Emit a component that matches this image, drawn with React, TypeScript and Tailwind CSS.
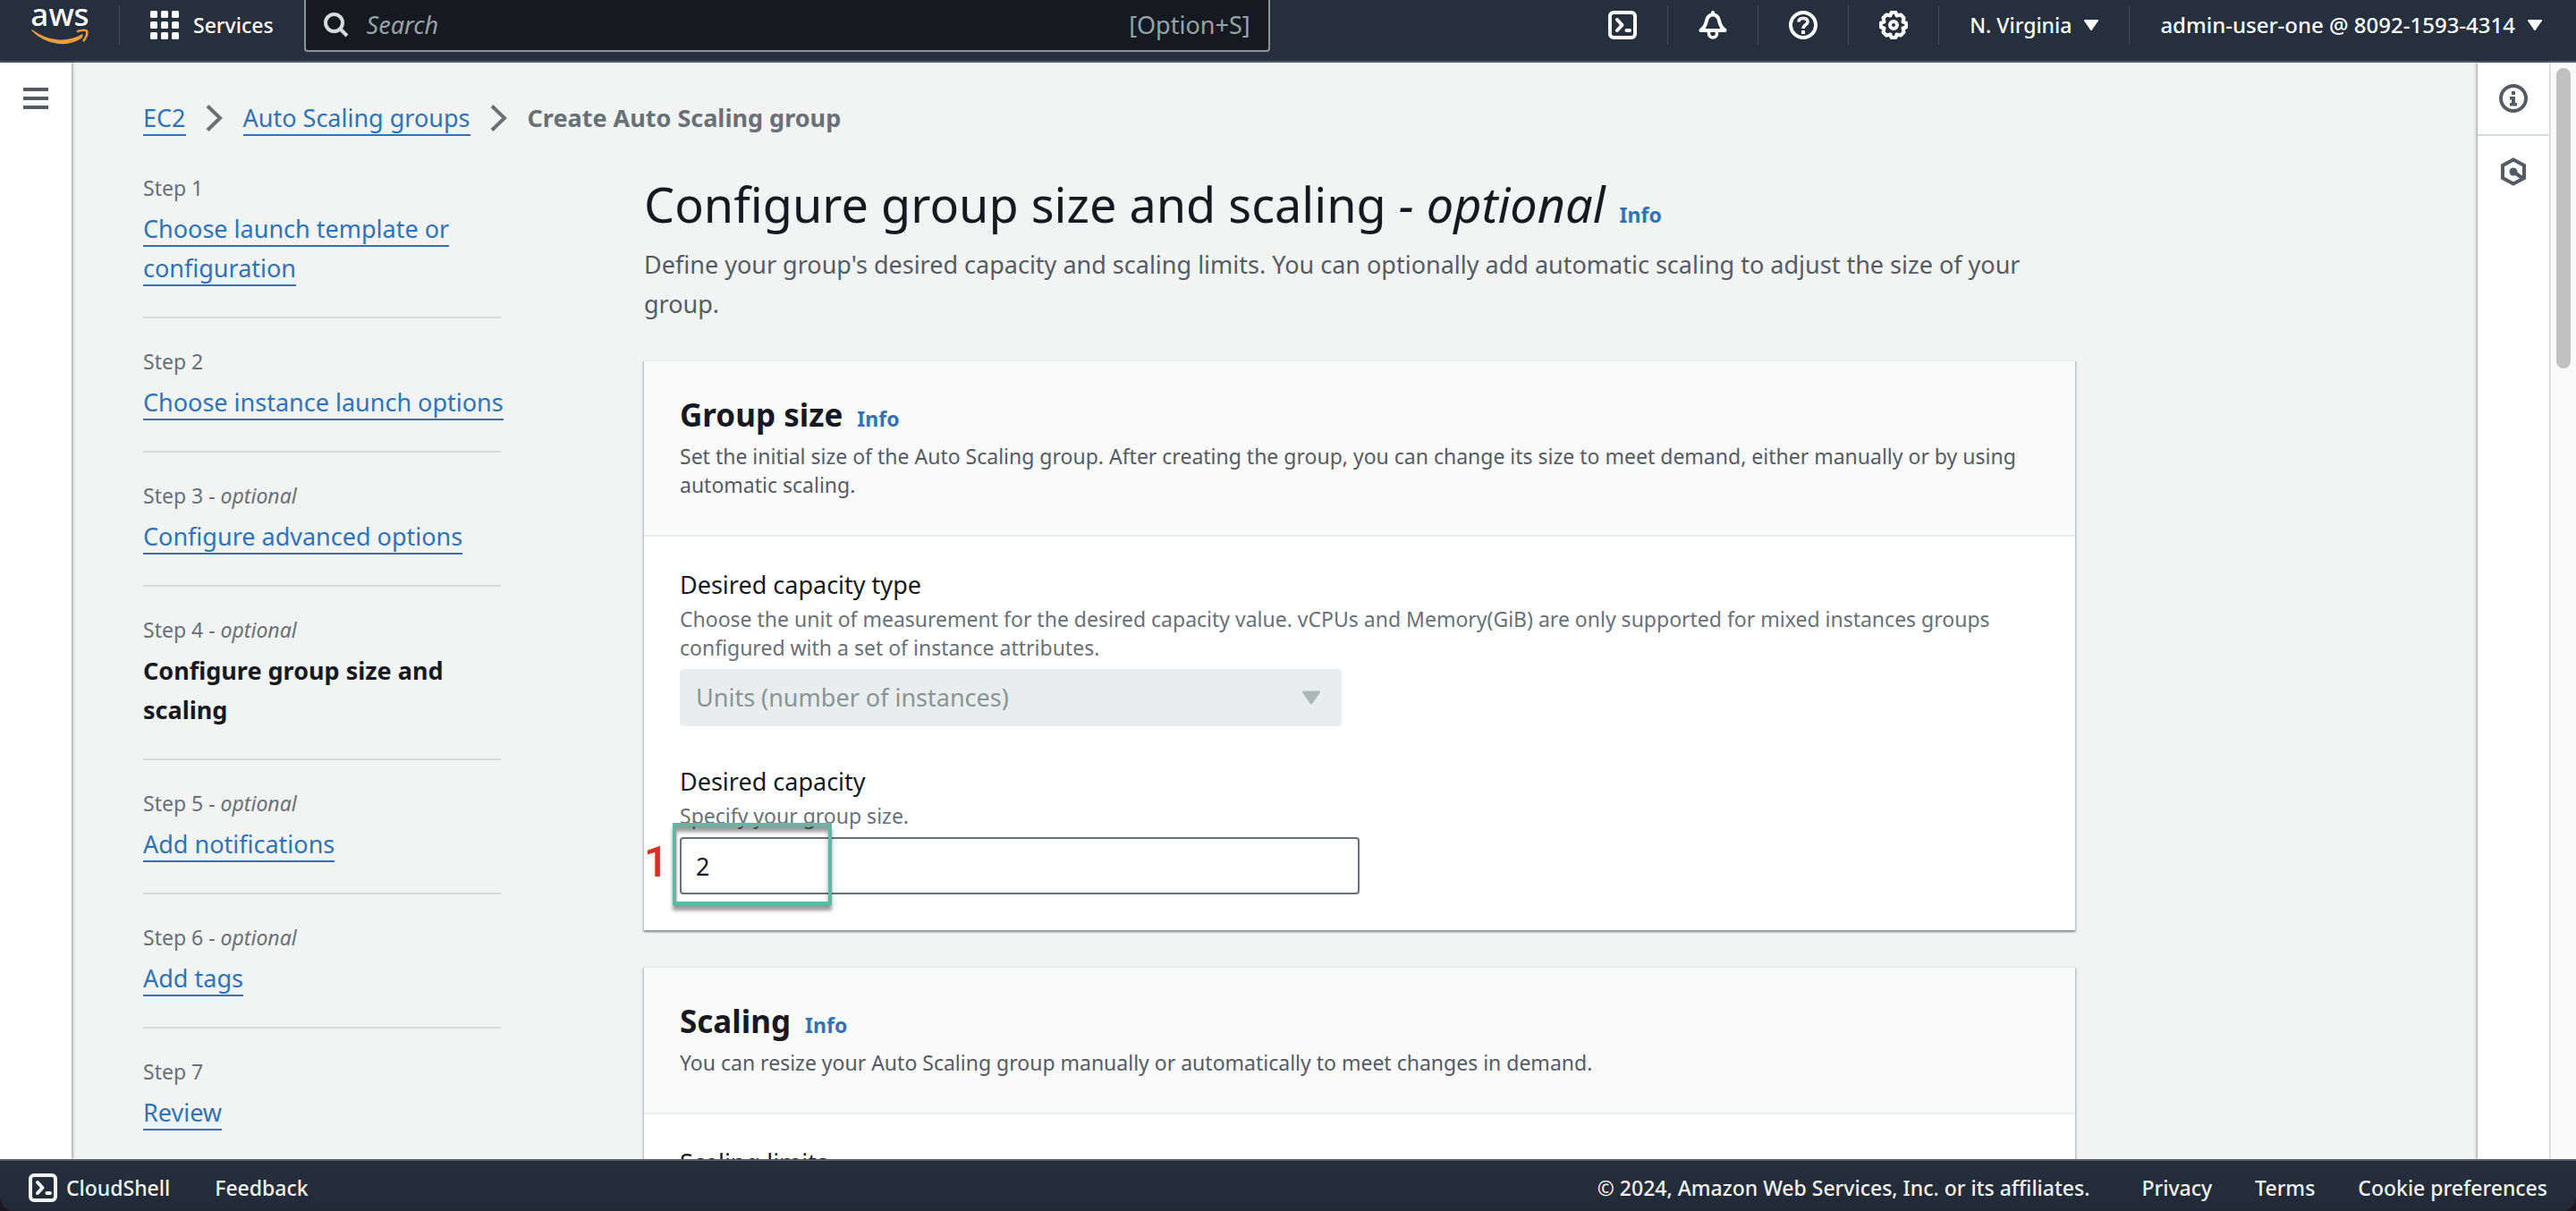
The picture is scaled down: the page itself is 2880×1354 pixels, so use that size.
import React from "react";

type Step = { n: number; optional?: boolean; title: string; current?: boolean };

const steps: Step[] = [
  { n: 1, title: "Choose launch template or configuration" },
  { n: 2, title: "Choose instance launch options" },
  { n: 3, optional: true, title: "Configure advanced options" },
  { n: 4, optional: true, title: "Configure group size and scaling", current: true },
  { n: 5, optional: true, title: "Add notifications" },
  { n: 6, optional: true, title: "Add tags" },
  { n: 7, title: "Review" },
];

function CloudShellIcon() {
  return (
    <svg viewBox="0 0 32 32" className="size-8" fill="none" stroke="currentColor" strokeWidth="4" aria-hidden="true">
      <rect x="2" y="2" width="28" height="28" rx="4" />
      <path d="M10 10L15.500 16L10 22" strokeLinecap="round" strokeLinejoin="round" />
      <path d="M20.500 22H24" strokeLinecap="round" />
    </svg>
  );
}

function BellIcon() {
  return (
    <svg viewBox="0 0 32 32" className="size-8" fill="none" stroke="currentColor" strokeWidth="4" strokeLinejoin="round" aria-hidden="true">
      <path d="M16 2V4" strokeLinecap="round" />
      <path d="M2.500 22H29.500C26 19.500 24 16 23 11C22 7 19.500 4.500 16 4.500S10 7 9 11C8 16 6 19.500 2.500 22Z" />
      <path d="M11.500 23V25.500C11.500 28 13.500 30 16 30S20.500 28 20.500 25.500V23" strokeWidth="3.500" />
    </svg>
  );
}

function HelpIcon() {
  return (
    <svg viewBox="0 0 32 32" className="size-8" fill="none" stroke="currentColor" strokeWidth="4" aria-hidden="true">
      <circle cx="16" cy="16" r="14" />
      <path d="M11 12.500C11 10 13 8.500 16 8.500S21 10 21 12.500C21 16 16 15.500 16 20" strokeWidth="3.500" />
      <rect x="14" y="22" width="4" height="4" fill="currentColor" stroke="none" />
    </svg>
  );
}

function GearIcon() {
  return (
    <svg viewBox="0 0 32 32" className="size-8" fill="none" stroke="currentColor" strokeWidth="4" strokeLinejoin="round" aria-hidden="true">
      <path d="M13.500 2H18.500L19.500 5.500L24 4.500L27.500 8L26.500 12.500L30 13.500V18.500L26.500 19.500L27.500 24L24 27.500L19.500 26.500L18.500 30H13.500L12.500 26.500L8 27.500L4.500 24L5.500 19.500L2 18.500V13.500L5.500 12.500L4.500 8L8 4.500L12.500 5.500Z" />
      <circle cx="16" cy="16" r="4" />
    </svg>
  );
}

function Caret({ className }: { className: string }) {
  return (
    <svg viewBox="0 0 16 12" className={className} fill="currentColor" stroke="currentColor" strokeWidth="2" strokeLinejoin="round" aria-hidden="true">
      <path d="M1 1H15L8 11Z" />
    </svg>
  );
}

function Chevron() {
  return (
    <svg viewBox="0 0 20 30" className="h-[30px] w-5 text-[#687078]" fill="none" stroke="currentColor" strokeWidth="4" aria-hidden="true">
      <path d="M2 1.500L16 15L2 28.500" />
    </svg>
  );
}

function InfoLink() {
  return (
    <a href="#info" className="text-[23px] font-bold text-[#2e73b8]">
      Info
    </a>
  );
}

function Divider() {
  return <span className="h-11 w-px bg-[#414a58]" />;
}

function Header() {
  return (
    <header className="flex h-[70px] shrink-0 items-start border-b-2 border-[#545b64] bg-[#262f3e] text-[23px] font-medium text-white">
      <div className="flex h-14 flex-1 items-center">
        <a href="#home" aria-label="aws" className="ml-[35px]">
          <svg viewBox="0 0 64 44" className="h-11 w-16" aria-hidden="true">
            <text x="32" y="23" textAnchor="middle" fontSize="35" fontFamily="Noto Sans" fontWeight="500" fill="#fff">
              aws
            </text>
            <path d="M1 28C20 42 42 42 57 33L56 36C42 46 18 45 1 28Z" fill="#ef9d3c" stroke="#ef9d3c" strokeWidth="1.500" strokeLinejoin="round" />
            <path d="M51 29.500C55 27.500 60 27.500 62 28.500C63 32 61 37 58 40" fill="none" stroke="#ef9d3c" strokeWidth="2.500" />
          </svg>
        </a>
        <span className="mx-[34px]">
          <span className="block h-11 w-px bg-[#414a58]" />
        </span>
        <button className="flex items-center gap-4">
          <svg viewBox="0 0 32 32" className="size-8" fill="currentColor" aria-hidden="true">
            {[0, 12, 24].map((y) => [0, 12, 24].map((x) => <rect key={`${x}-${y}`} x={x} y={y} width="8" height="8" rx="1.500" />))}
          </svg>
          Services
        </button>
        <div className="ml-[34px] flex h-[60px] w-[1080px] items-center rounded-b-[4px] border-2 border-t-0 border-[#879596] bg-[#16191f] px-5 pt-0.5 text-[#95a5a6]">
          <svg viewBox="0 0 28 28" className="size-7 text-[#d5dbdb]" fill="none" stroke="currentColor" strokeWidth="4" aria-hidden="true">
            <circle cx="11.500" cy="11.500" r="9.500" />
            <path d="M18 18L26 26" />
          </svg>
          <input aria-label="Search" placeholder="Search" className="ml-5 min-w-0 flex-1 bg-transparent text-[27px] font-normal italic outline-none placeholder:text-[#95a5a6]" />
          <span className="text-[27px] font-normal">[Option+S]</span>
        </div>
      </div>
      <div className="flex h-14 items-center gap-[34px] pr-[38px]">
        <button aria-label="CloudShell"><CloudShellIcon /></button>
        <Divider />
        <button aria-label="Notifications"><BellIcon /></button>
        <Divider />
        <button aria-label="Support"><HelpIcon /></button>
        <Divider />
        <button aria-label="Settings"><GearIcon /></button>
        <Divider />
        <button className="flex items-center gap-3.5">
          N. Virginia <Caret className="h-3 w-4" />
        </button>
        <Divider />
        <button className="flex items-center gap-3.5 text-[24px]">
          admin-user-one @ 8092-1593-4314 <Caret className="h-3 w-4" />
        </button>
      </div>
    </header>
  );
}

function StepNav() {
  return (
    <ol className="w-[400px] shrink-0">
      {steps.map((s) => (
        <li key={s.n} className="mb-7 border-b-2 border-[#d5dbdb] pb-8 last:border-0">
          <div className="text-[23px] leading-10 text-[#687078]">
            Step {s.n}
            {s.optional && (
              <>
                {" "}- <i>optional</i>
              </>
            )}
          </div>
          <div className="mt-1 -mr-4 text-[27px] leading-[44px]">
            {s.current ? (
              <b className="text-[#16191f]">{s.title}</b>
            ) : (
              <a href={`#step-${s.n}`} className="border-b-2 border-[#2e73b8] text-[#2e73b8]">
                {s.title}
              </a>
            )}
          </div>
        </li>
      ))}
    </ol>
  );
}

function Card({ title, desc, children }: { title: string; desc: string; children: React.ReactNode }) {
  return (
    <section className="border-t-2 border-[#eaeded] bg-white shadow-[0_2px_2px_0_#879596,2px_2px_2px_0_#d5dbdb,-2px_2px_2px_0_#d5dbdb]">
      <div className="border-b-2 border-[#eaeded] bg-[#fafafa] px-10 pt-9 pb-10">
        <h2 className="flex items-baseline gap-4 text-[35px] leading-[48px] font-bold text-[#16191f]">
          {title} <InfoLink />
        </h2>
        <p className="mt-0.5 text-[23px] leading-8 text-[#545b64]">{desc}</p>
      </div>
      <div className="px-10 pt-8 pb-10">{children}</div>
    </section>
  );
}

function Main() {
  return (
    <main className="w-[1600px] pt-1.5">
      <h1 className="flex items-baseline gap-4 text-[54px] leading-[64px] text-[#16191f]">
        <span>
          Configure group size and scaling <i>- optional</i>
        </span>
        <InfoLink />
      </h1>
      <p className="mt-0.5 text-[27px] leading-[44px] text-[#545b64]">
        Define your group's desired capacity and scaling limits. You can optionally add automatic scaling to adjust the size of your group.
      </p>
      <div className="mt-10 flex flex-col gap-10">
        <Card
          title="Group size"
          desc="Set the initial size of the Auto Scaling group. After creating the group, you can change its size to meet demand, either manually or by using automatic scaling."
        >
          <label htmlFor="type" className="block text-[27px] leading-[44px] text-[#16191f]">
            Desired capacity type
          </label>
          <p className="text-[23px] leading-8 text-[#687078]">
            Choose the unit of measurement for the desired capacity value. vCPUs and Memory(GiB) are only supported for mixed instances groups configured with a set of instance attributes.
          </p>
          <div className="relative mt-2 w-[740px]">
            <select id="type" disabled className="h-16 w-full appearance-none rounded-[4px] bg-[#eaeded] px-[18px] text-[27px] text-[#879596] opacity-100">
              <option>Units (number of instances)</option>
            </select>
            <Caret className="absolute top-6 right-6 h-4 w-5 text-[#aab7b8]" />
          </div>
          <label htmlFor="capacity" className="mt-10 block text-[27px] leading-[44px] text-[#16191f]">
            Desired capacity
          </label>
          <p className="text-[23px] leading-8 text-[#687078]">Specify your group size.</p>
          <div className="relative mt-2 w-[760px]">
            <input id="capacity" defaultValue="2" className="block h-16 w-full rounded-[4px] border-2 border-[#687078] bg-white px-4 text-[27px] text-[#16191f]" />
            <span className="absolute -top-4 -left-2 h-[92px] w-[178px] border-4 border-[#5bb9a6] shadow-[0_6px_4px_0_#00000066,inset_0_6px_4px_0_#00000066]" />
            <span className="absolute top-0 -left-10 font-['Roboto',sans-serif] text-[48px] leading-[56px] font-medium text-[#d93025]">1</span>
          </div>
        </Card>
        <Card title="Scaling" desc="You can resize your Auto Scaling group manually or automatically to meet changes in demand.">
          <h3 className="text-[27px] leading-[44px] text-[#16191f]">Scaling limits</h3>
        </Card>
      </div>
    </main>
  );
}

export default function App() {
  return (
    <div className="flex h-screen flex-col overflow-hidden bg-[#1a1720] font-['Noto_Sans',sans-serif]">
      <Header />
      <div className="flex min-h-0 flex-1 bg-[#f2f4f3]">
        <aside className="z-10 w-20 shrink-0 bg-white pt-7 text-center shadow-[1px_0_3px_#00000066]">
          <button aria-label="Open navigation">
            <svg viewBox="0 0 28 24" className="h-6 w-7" fill="#545b64" aria-hidden="true">
              <rect width="28" height="4" />
              <rect y="10" width="28" height="4" />
              <rect y="20" width="28" height="4" />
            </svg>
          </button>
        </aside>
        <div className="min-w-0 flex-1 overflow-hidden px-20 pt-10">
          <nav aria-label="Breadcrumb" className="flex items-center gap-[22px] text-[27px] leading-[44px] text-[#2e73b8]">
            <span><a href="#ec2" className="border-b-2 border-[#2e73b8]">EC2</a></span>
            <Chevron />
            <span><a href="#asg" className="border-b-2 border-[#2e73b8]">Auto Scaling groups</a></span>
            <Chevron />
            <b className="text-[#687078]">Create Auto Scaling group</b>
          </nav>
          <div className="mt-9 flex gap-40">
            <StepNav />
            <Main />
          </div>
        </div>
        <aside className="z-10 w-20 shrink-0 bg-white text-[#545b64] shadow-[-1px_0_3px_#00000066]">
          <button aria-label="Info panel" className="flex h-[82px] w-full items-center justify-center border-b-2 border-[#d5dbdb]">
            <svg viewBox="0 0 32 32" className="size-8" fill="none" stroke="currentColor" aria-hidden="true">
              <circle cx="16" cy="16" r="14" strokeWidth="4" />
              <path d="M14 8H18V12H14ZM12 14H18V21H20V24.500H12V21H14V17.500H12Z" fill="currentColor" stroke="none" />
            </svg>
          </button>
          <button aria-label="Diagnostics" className="flex h-20 w-full items-center justify-center">
            <svg viewBox="0 0 32 32" className="size-8" fill="none" stroke="currentColor" strokeWidth="4" aria-hidden="true">
              <path d="M16 2.500L28 9V23L16 29.500L4 23V9Z" />
              <circle cx="16" cy="16" r="4.500" fill="currentColor" stroke="none" />
              <path d="M16 16L26 23" />
            </svg>
          </button>
        </aside>
        <div className="w-[30px] shrink-0 border-l-2 border-[#e8e8e8] bg-[#fafafa] pt-1.5">
          <div className="mx-auto h-[336px] w-4 rounded-full bg-[#c1c1c1]" />
        </div>
      </div>
      <footer className="z-20 flex h-[58px] shrink-0 items-center rounded-b-2xl border-t-2 border-[#545b64] bg-linear-to-b from-[#262f3e] to-[#222a36] px-8 pt-1 text-[23px] font-medium text-[#f2f3f3]">
        <button className="flex items-center gap-2.5"><CloudShellIcon />CloudShell</button>
        <button className="ml-[50px]">Feedback</button>
        <span className="ml-auto">© 2024, Amazon Web Services, Inc. or its affiliates.</span>
        <a href="#privacy" className="ml-[58px]">Privacy</a>
        <a href="#terms" className="ml-12">Terms</a>
        <a href="#cookies" className="ml-12">Cookie preferences</a>
      </footer>
    </div>
  );
}
